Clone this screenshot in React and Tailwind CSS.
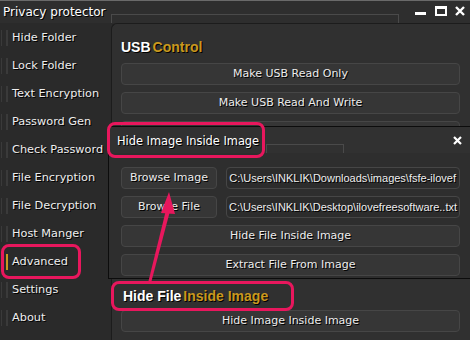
import React from 'react';

const menu = [
  'Hide Folder',
  'Lock Folder',
  'Text Encryption',
  'Password Gen',
  'Check Password',
  'File Encryption',
  'File Decryption',
  'Host Manger',
  'Advanced',
  'Settings',
  'About',
];

const font = { fontFamily: '"DejaVu Sans", Tahoma, sans-serif' };

const Btn = ({ children, className = '' }) => (
  <div
    className={`h-[22px] flex items-center justify-center rounded-[4px] border border-[#464646] bg-[#363636] text-[11px] text-[#ececec] [text-shadow:1px_1px_0_#000] ${className}`}
  >
    {children}
  </div>
);

const Heading = ({ white, gold }) => (
  <div className="h-[16px] flex items-center gap-[2px] text-[14px] font-bold leading-none [text-shadow:1px_1px_0_#000] font-['Liberation_Sans',Arial,sans-serif]">
    <span className="text-white">{white}</span>
    <span className="text-[#c9981e]">{gold}</span>
  </div>
);

export default function App() {
  return (
    <div
      className="relative w-[470px] h-[340px] overflow-hidden bg-[#2a2a2a] text-[#e8e8e8]"
      style={font}
    >
      {/* title bar */}
      <div className="h-[23px] flex border-t border-[#6a6a6a] bg-[#2e2e2e]">
        <div className="w-[111px] pl-[3px] pt-[2px] text-[12px] text-white [text-shadow:1px_1px_0_#000]">
          Privacy protector
        </div>
        <div className="w-[288px] h-[9px] mt-[13px] border-t border-r border-l border-[#4a4a4a]" />
        <div className="flex-1 flex items-start justify-end gap-[8px] pr-[5px] pt-[5px]">
          <svg width="12" height="10" viewBox="0 0 12 10">
            <rect x="0" y="6" width="11" height="3" fill="#fff" />
          </svg>
          <svg width="12" height="10" viewBox="0 0 12 10">
            <rect x="1" y="1" width="10" height="8" fill="none" stroke="#fff" strokeWidth="2" />
            <rect x="0" y="0" width="12" height="3" fill="#fff" />
          </svg>
          <svg width="10" height="10" viewBox="0 0 10 10">
            <path d="M1 1 L9 9 M9 1 L1 9" stroke="#fff" strokeWidth="2.4" />
          </svg>
        </div>
      </div>

      <div className="flex h-[317px]">
        {/* sidebar */}
        <div className="w-[111px] pt-[1px] bg-[#2a2a2a]">
          {menu.map((m) => (
            <div key={m} className="h-[28px] flex items-center">
              <div className="w-[1px] h-[16px] ml-[1px] bg-[#3a3a3a]" />
              <div
                className={`w-[2px] h-[16px] ml-[4px] ${m === 'Advanced' ? 'bg-[#c9981e]' : 'bg-[#3a3a3a]'}`}
              />
              <span className="ml-[4px] text-[11.3px] text-[#eeeeee] [text-shadow:1px_1px_0_#000] whitespace-nowrap">
                {m}
              </span>
            </div>
          ))}
        </div>

        {/* main panel */}
        <div className="flex-1 border-l border-t border-[#1c1c1c] rounded-tl-[6px] bg-[#303030] pl-[9px] pr-[10px] pt-[15px] flex flex-col">
          <Heading white="USB" gold="Control" />
          <div className="mt-[8px] flex flex-col gap-[7px]">
            <Btn>Make USB Read Only</Btn>
            <Btn>Make USB Read And Write</Btn>
            {/* only the top of this one shows above the dialog */}
            <div className="h-[6px] overflow-hidden">
              <Btn className="text-[#bdbdbd] items-start pt-[1px]">Please Make USB Take It Out Before Make Usb Read</Btn>
            </div>
          </div>
          <div className="mt-[161px] pl-[2px]">
            <Heading white="Hide File" gold="Inside Image" />
          </div>
          <Btn className="mt-[6px]">Hide Image Inside Image</Btn>
        </div>
      </div>

      {/* dialog */}
      <div className="absolute left-[108px] top-[126px] right-0 h-[153px] border-l border-t border-b border-[#0c0c0c] bg-[#2e2e2e]">
        <div className="h-[26px] flex items-start bg-[#313131]">
          <span className="ml-[8px] mt-[6px] text-[11.4px] text-white [text-shadow:1px_1px_0_#000]">
            Hide Image Inside Image
          </span>
          <div className="ml-[7px] mt-[17px] w-[78px] h-[9px] border-t border-r border-l border-[#4a4a4a]" />
          <div className="flex-1 flex justify-end pr-[8px] pt-[9px]">
            <svg width="9" height="9" viewBox="0 0 9 9">
              <path d="M1 1 L8 8 M8 1 L1 8" stroke="#fff" strokeWidth="2.2" />
            </svg>
          </div>
        </div>
        <div className="pl-[12px] pr-[10px] pt-[14px] flex flex-col gap-[7px]">
          <div className="flex gap-[9px]">
            <Btn className="w-[96px]">Browse Image</Btn>
            <div className="flex-1 h-[22px] overflow-hidden rounded-[4px] border border-[#464646] bg-[#2c2c2c] flex items-center justify-end pr-[3px] text-[11px] text-[#eeeeee] whitespace-nowrap font-['Liberation_Sans',Arial,sans-serif] [text-shadow:1px_1px_0_#000]">
              C:\Users\INKLIK\Downloads\images\fsfe-ilovef
            </div>
          </div>
          <div className="flex gap-[9px]">
            <Btn className="w-[96px]">Browse File</Btn>
            <div className="flex-1 h-[22px] overflow-hidden rounded-[4px] border border-[#464646] bg-[#2c2c2c] flex items-center pl-[2px] text-[11px] text-[#eeeeee] whitespace-nowrap font-['Liberation_Sans',Arial,sans-serif] [text-shadow:1px_1px_0_#000]">
              C:\Users\INKLIK\Desktop\ilovefreesoftware..txt
            </div>
          </div>
          <Btn>Hide File Inside Image</Btn>
          <Btn>Extract File From Image</Btn>
        </div>
      </div>

      {/* annotations */}
      <div className="absolute left-[107px] top-[122px] w-[158px] h-[36px] rounded-[8px] border-[3px] border-[#e8175d]" />
      <div className="absolute left-[1px] top-[244px] w-[80px] h-[35px] rounded-[8px] border-[3px] border-[#e8175d]" />
      <div className="absolute left-[111px] top-[281px] w-[183px] h-[30px] rounded-[8px] border-[3px] border-[#e8175d]" />
      <svg className="absolute left-0 top-0" width="470" height="340" viewBox="0 0 470 340">
        <polygon points="148,283 151,283 170,211 166,210" fill="#e8175d" />
        <polygon points="169,192 161,213 175,214" fill="#e8175d" />
      </svg>
    </div>
  );
}
